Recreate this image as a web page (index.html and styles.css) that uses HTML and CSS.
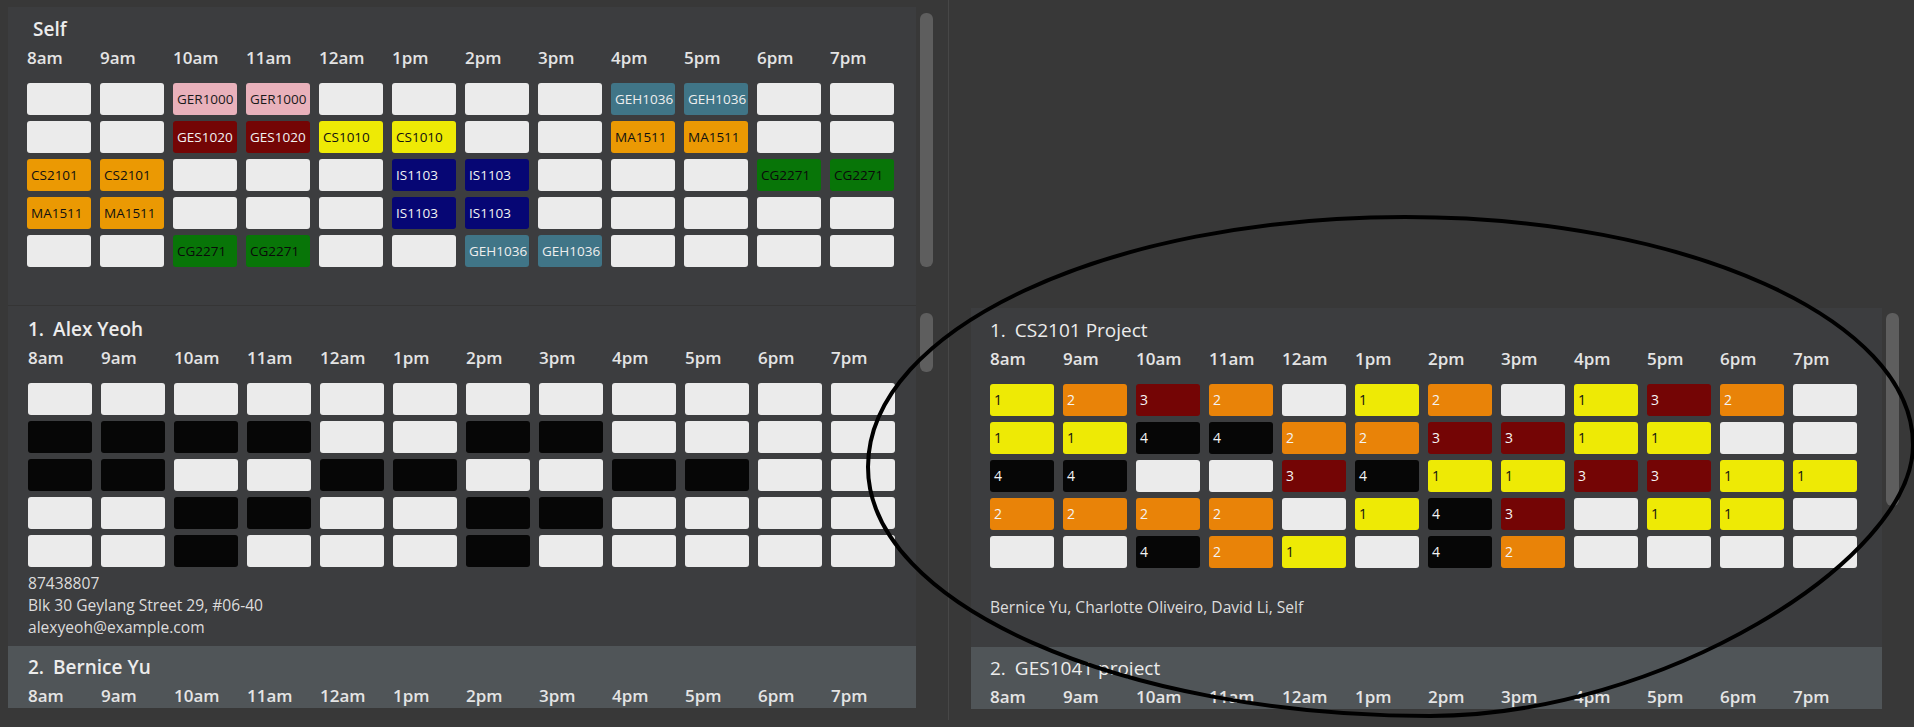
FILE: index.html
```html
<!DOCTYPE html>
<html>
<head>
<meta charset="utf-8">
<link rel="stylesheet" href="styles.css">
</head>
<body>
<div class="app">
  <div class="main">
    <div class="pane-left">
      <div class="self-sec">
        <div class="self-card">
          <div class="self-title">Self</div>
          <div class="hours"><span>8am</span><span>9am</span><span>10am</span><span>11am</span><span>12am</span><span>1pm</span><span>2pm</span><span>3pm</span><span>4pm</span><span>5pm</span><span>6pm</span><span>7pm</span></div>
          <div class="grid">
            <div class="c"></div><div class="c"></div><div class="c pk">GER1000</div><div class="c pk">GER1000</div><div class="c"></div><div class="c"></div><div class="c"></div><div class="c"></div><div class="c tl">GEH1036</div><div class="c tl">GEH1036</div><div class="c"></div><div class="c"></div>
            <div class="c"></div><div class="c"></div><div class="c dr">GES1020</div><div class="c dr">GES1020</div><div class="c ye">CS1010</div><div class="c ye">CS1010</div><div class="c"></div><div class="c"></div><div class="c or">MA1511</div><div class="c or">MA1511</div><div class="c"></div><div class="c"></div>
            <div class="c or">CS2101</div><div class="c or">CS2101</div><div class="c"></div><div class="c"></div><div class="c"></div><div class="c nv">IS1103</div><div class="c nv">IS1103</div><div class="c"></div><div class="c"></div><div class="c"></div><div class="c gr">CG2271</div><div class="c gr">CG2271</div>
            <div class="c or">MA1511</div><div class="c or">MA1511</div><div class="c"></div><div class="c"></div><div class="c"></div><div class="c nv">IS1103</div><div class="c nv">IS1103</div><div class="c"></div><div class="c"></div><div class="c"></div><div class="c"></div><div class="c"></div>
            <div class="c"></div><div class="c"></div><div class="c gr">CG2271</div><div class="c gr">CG2271</div><div class="c"></div><div class="c"></div><div class="c tl">GEH1036</div><div class="c tl">GEH1036</div><div class="c"></div><div class="c"></div><div class="c"></div><div class="c"></div>
          </div>
        </div>
        <div class="sbar"><div class="thumb thumb-self"></div></div>
      </div>
      <div class="sep"></div>
      <div class="list-sec">
        <div class="list">
          <div class="card">
            <div class="title"><span class="idx">1.</span><span>Alex Yeoh</span></div>
            <div class="hours"><span>8am</span><span>9am</span><span>10am</span><span>11am</span><span>12am</span><span>1pm</span><span>2pm</span><span>3pm</span><span>4pm</span><span>5pm</span><span>6pm</span><span>7pm</span></div>
            <div class="grid">
              <div class="c"></div><div class="c"></div><div class="c"></div><div class="c"></div><div class="c"></div><div class="c"></div><div class="c"></div><div class="c"></div><div class="c"></div><div class="c"></div><div class="c"></div><div class="c"></div>
              <div class="c bk"></div><div class="c bk"></div><div class="c bk"></div><div class="c bk"></div><div class="c"></div><div class="c"></div><div class="c bk"></div><div class="c bk"></div><div class="c"></div><div class="c"></div><div class="c"></div><div class="c"></div>
              <div class="c bk"></div><div class="c bk"></div><div class="c"></div><div class="c"></div><div class="c bk"></div><div class="c bk"></div><div class="c"></div><div class="c"></div><div class="c bk"></div><div class="c bk"></div><div class="c"></div><div class="c"></div>
              <div class="c"></div><div class="c"></div><div class="c bk"></div><div class="c bk"></div><div class="c"></div><div class="c"></div><div class="c bk"></div><div class="c bk"></div><div class="c"></div><div class="c"></div><div class="c"></div><div class="c"></div>
              <div class="c"></div><div class="c"></div><div class="c bk"></div><div class="c"></div><div class="c"></div><div class="c"></div><div class="c bk"></div><div class="c"></div><div class="c"></div><div class="c"></div><div class="c"></div><div class="c"></div>
            </div>
            <div class="info">
              <div>87438807</div>
              <div>Blk 30 Geylang Street 29, #06-40</div>
              <div>alexyeoh@example.com</div>
            </div>
          </div>
          <div class="card alt">
            <div class="title"><span class="idx">2.</span><span>Bernice Yu</span></div>
            <div class="hours"><span>8am</span><span>9am</span><span>10am</span><span>11am</span><span>12am</span><span>1pm</span><span>2pm</span><span>3pm</span><span>4pm</span><span>5pm</span><span>6pm</span><span>7pm</span></div>
          </div>
        </div>
        <div class="sbar"><div class="thumb thumb-list"></div></div>
      </div>
    </div>
    <div class="divider"></div>
    <div class="pane-right">
      <div class="list-sec right">
        <div class="list">
          <div class="card proj">
            <div class="title"><span class="idx">1.</span><span>CS2101 Project</span></div>
            <div class="hours"><span>8am</span><span>9am</span><span>10am</span><span>11am</span><span>12am</span><span>1pm</span><span>2pm</span><span>3pm</span><span>4pm</span><span>5pm</span><span>6pm</span><span>7pm</span></div>
            <div class="grid">
              <div class="c n1">1</div><div class="c n2">2</div><div class="c n3">3</div><div class="c n2">2</div><div class="c"></div><div class="c n1">1</div><div class="c n2">2</div><div class="c"></div><div class="c n1">1</div><div class="c n3">3</div><div class="c n2">2</div><div class="c"></div>
              <div class="c n1">1</div><div class="c n1">1</div><div class="c n4">4</div><div class="c n4">4</div><div class="c n2">2</div><div class="c n2">2</div><div class="c n3">3</div><div class="c n3">3</div><div class="c n1">1</div><div class="c n1">1</div><div class="c"></div><div class="c"></div>
              <div class="c n4">4</div><div class="c n4">4</div><div class="c"></div><div class="c"></div><div class="c n3">3</div><div class="c n4">4</div><div class="c n1">1</div><div class="c n1">1</div><div class="c n3">3</div><div class="c n3">3</div><div class="c n1">1</div><div class="c n1">1</div>
              <div class="c n2">2</div><div class="c n2">2</div><div class="c n2">2</div><div class="c n2">2</div><div class="c"></div><div class="c n1">1</div><div class="c n4">4</div><div class="c n3">3</div><div class="c"></div><div class="c n1">1</div><div class="c n1">1</div><div class="c"></div>
              <div class="c"></div><div class="c"></div><div class="c n4">4</div><div class="c n2">2</div><div class="c n1">1</div><div class="c"></div><div class="c n4">4</div><div class="c n2">2</div><div class="c"></div><div class="c"></div><div class="c"></div><div class="c"></div>
            </div>
            <div class="members">Bernice Yu, Charlotte Oliveiro, David Li, Self</div>
          </div>
          <div class="card alt proj">
            <div class="title"><span class="idx">2.</span><span>GES1041 project</span></div>
            <div class="hours"><span>8am</span><span>9am</span><span>10am</span><span>11am</span><span>12am</span><span>1pm</span><span>2pm</span><span>3pm</span><span>4pm</span><span>5pm</span><span>6pm</span><span>7pm</span></div>
          </div>
        </div>
        <div class="sbar"><div class="thumb thumb-right"></div></div>
      </div>
    </div>
  </div>
  <div class="status"></div>
  <svg class="annot" width="1914" height="727" viewBox="0 0 1914 727">
    <path d="M 868 467 C 868 329, 1108 217, 1405 217 C 1686 217, 1913 319, 1913 445 C 1913 560, 1660 716, 1430 716 C 1120 716, 868 604, 868 467 Z" fill="none" stroke="#000" stroke-width="4"/>
  </svg>
</div>
</body>
</html>
```

FILE: styles.css
```css
html, body {
  margin: 0;
  padding: 0;
  background: #383838;
  font-family: "Open Sans", "Noto Sans", "DejaVu Sans", sans-serif;
  color: #e6e6e6;
}

.app {
  position: relative;
  width: 1914px;
  height: 727px;
  overflow: hidden;
  display: flex;
  flex-direction: column;
}

.main {
  display: flex;
  height: 720px;
}

.status {
  height: 7px;
  background: #3b3b3b;
}

.pane-left {
  width: 948px;
  display: flex;
  flex-direction: column;
  padding-top: 7px;
  box-sizing: border-box;
}

.divider {
  width: 1px;
  background: #474747;
}

.pane-right {
  flex: 1;
  display: flex;
  flex-direction: column;
  padding-top: 308px;
  box-sizing: border-box;
}

.self-sec {
  display: flex;
  height: 298px;
}

.self-card {
  width: 908px;
  margin-left: 8px;
  background: #3c3d3f;
  padding: 9px 0 0 19px;
  box-sizing: border-box;
}

.self-title {
  font-size: 19px;
  line-height: 26px;
  font-weight: 600;
  color: #ececec;
  padding-left: 6px;
}

.sep {
  height: 1px;
  margin-left: 8px;
  width: 908px;
  background: #353535;
}

.sbar {
  width: 32px;
}

.thumb {
  margin-left: 4px;
  width: 13px;
  background: #5e5e5e;
  border-radius: 6px;
}

.thumb-self {
  margin-top: 6px;
  height: 254px;
}

.thumb-list {
  margin-top: 7px;
  height: 59px;
}

.thumb-right {
  margin-top: 5px;
  height: 193px;
}

.list-sec {
  display: flex;
  height: 402px;
}

.list-sec.right {
  height: 401px;
}

.list {
  width: 908px;
  margin-left: 8px;
  overflow: hidden;
  display: flex;
  flex-direction: column;
}

.right .list {
  width: 911px;
  margin-left: 22px;
}

.card {
  flex-shrink: 0;
  background: #3c3d3f;
  padding: 10px 0 8px 20px;
}

.card.proj {
  padding: 9px 0 29px 19px;
}

.card.alt {
  background: #505558;
  padding-top: 8px;
}

.title {
  display: flex;
  gap: 9px;
  font-size: 19px;
  line-height: 26px;
  font-weight: 600;
  color: #ececec;
}

.proj .title {
  font-weight: 400;
}

.hours {
  display: grid;
  grid-template-columns: repeat(12, 64px);
  column-gap: 9px;
  margin-top: 5px;
  font-size: 17px;
  line-height: 22px;
  font-weight: 600;
  color: #e4e4e4;
}

.grid {
  display: grid;
  grid-template-columns: repeat(12, 64px);
  grid-auto-rows: 32px;
  column-gap: 9px;
  row-gap: 6px;
  margin-top: 14px;
}

.c {
  background: #ebebeb;
  border-radius: 3px;
  font-size: 13.5px;
  line-height: 32px;
  padding-left: 4px;
  color: #111;
  white-space: nowrap;
  overflow: hidden;
}

.pk { background: #e9b1bb; color: #1a1a1a; }
.dr { background: #740505; color: #f2f2f2; }
.ye { background: #eeea05; color: #111; }
.or { background: #eb9903; color: #111; }
.nv { background: #060674; color: #f2f2f2; }
.gr { background: #087508; color: #0a0a0a; }
.tl { background: #407587; color: #eeeeee; }
.bk { background: #060606; }

.n1 { background: #eeea05; color: #111; font-size: 14px; }
.n2 { background: #e98308; color: #f4f4f4; font-size: 14px; }
.n3 { background: #740505; color: #f4f4f4; font-size: 14px; }
.n4 { background: #060606; color: #f4f4f4; font-size: 14px; }

.info {
  margin-top: 5px;
  font-size: 15.6px;
  line-height: 22px;
  color: #dcdcdc;
}

.members {
  margin-top: 28px;
  font-size: 15.6px;
  line-height: 22px;
  color: #dcdcdc;
}

.annot {
  position: absolute;
  left: 0;
  top: 0;
  pointer-events: none;
}
```
